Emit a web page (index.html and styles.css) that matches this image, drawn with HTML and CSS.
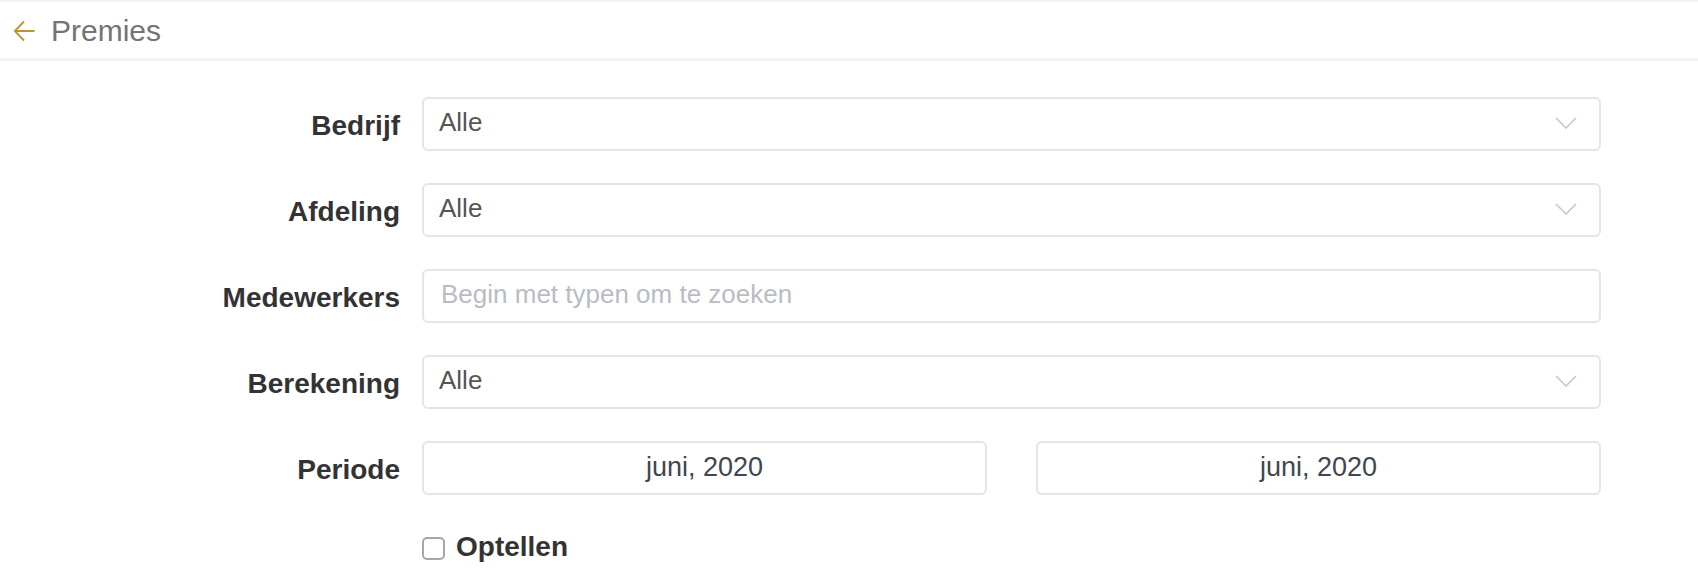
FILE: index.html
```html
<!DOCTYPE html>
<html lang="nl">
<head>
<meta charset="utf-8">
<title>Premies</title>
<link rel="stylesheet" href="styles.css">
</head>
<body>
<header class="topbar">
  <a class="back" href="#" aria-label="Terug">
    <svg width="22" height="22" viewBox="0 0 22 22"><path d="M21.5 11H2M11 1.5L1.8 11l9.2 9.5" fill="none" stroke="#b8972f" stroke-width="1.8"/></svg>
  </a>
  <h1 class="title">Premies</h1>
</header>
<form class="form">
  <label class="label">Bedrijf</label>
  <div class="select"><span class="value">Alle</span><svg class="chev" width="22" height="12" viewBox="0 0 22 12"><path d="M1 1l10 10L21 1" fill="none" stroke="#c3c7cf" stroke-width="1.6"/></svg></div>

  <label class="label">Afdeling</label>
  <div class="select"><span class="value">Alle</span><svg class="chev" width="22" height="12" viewBox="0 0 22 12"><path d="M1 1l10 10L21 1" fill="none" stroke="#c3c7cf" stroke-width="1.6"/></svg></div>

  <label class="label">Medewerkers</label>
  <div class="input"><span class="placeholder">Begin met typen om te zoeken</span></div>

  <label class="label">Berekening</label>
  <div class="select"><span class="value">Alle</span><svg class="chev" width="22" height="12" viewBox="0 0 22 12"><path d="M1 1l10 10L21 1" fill="none" stroke="#c3c7cf" stroke-width="1.6"/></svg></div>

  <label class="label">Periode</label>
  <div class="period">
    <div class="date">juni, 2020</div>
    <div class="date">juni, 2020</div>
  </div>

  <span></span>
  <div class="check"><span class="box"></span><span class="check-label">Optellen</span></div>
</form>
</body>
</html>
```
FILE: styles.css
```css
html, body {
  margin: 0;
  padding: 0;
  background: #fff;
  font-family: "Liberation Sans", Arial, Helvetica, sans-serif;
}
.topbar {
  border-top: 2px solid #f4f4f4;
  border-bottom: 3px solid #f5f5f5;
  height: 56px;
  display: flex;
  align-items: center;
  padding-left: 13px;
  box-sizing: content-box;
}
.back {
  display: flex;
  width: 22px;
  height: 22px;
  margin-top: 1px;
}
.title {
  margin: 0 0 0 16px;
  font-size: 30px;
  font-weight: normal;
  color: #767372;
  line-height: 1;
  padding-top: 2px;
}
.form {
  display: grid;
  grid-template-columns: 400px 1179px;
  column-gap: 22px;
  row-gap: 32px;
  padding-top: 36px;
  align-items: center;
}
.label {
  text-align: right;
  font-size: 28px;
  font-weight: bold;
  color: #333;
  padding-top: 4px;
}
.select, .input, .date {
  height: 54px;
  box-sizing: border-box;
  border: 2px solid #e8e3e5;
  border-radius: 6px;
  display: flex;
  align-items: center;
  font-size: 26px;
}
.select, .input {
  padding: 0 22px 0 15px;
}
.select {
  justify-content: space-between;
}
.value {
  color: #555;
  padding-bottom: 3px;
}
.placeholder {
  color: #b9bcc4;
  padding-bottom: 3px;
  padding-left: 2px;
}
.chev {
  margin-top: -2px;
}
.period {
  display: grid;
  grid-template-columns: 1fr 1fr;
  column-gap: 49px;
}
.date {
  justify-content: center;
  font-size: 27px;
  color: #414750;
  padding-bottom: 2px;
}
.check {
  display: flex;
  align-items: center;
  gap: 11px;
  margin-top: 4px;
}
.box {
  width: 23px;
  height: 23px;
  box-sizing: border-box;
  border: 2px solid #a7a7a7;
  border-radius: 5px;
  background: #fff;
}
.check-label {
  font-size: 28px;
  font-weight: bold;
  color: #333;
  padding-bottom: 2px;
}
```
